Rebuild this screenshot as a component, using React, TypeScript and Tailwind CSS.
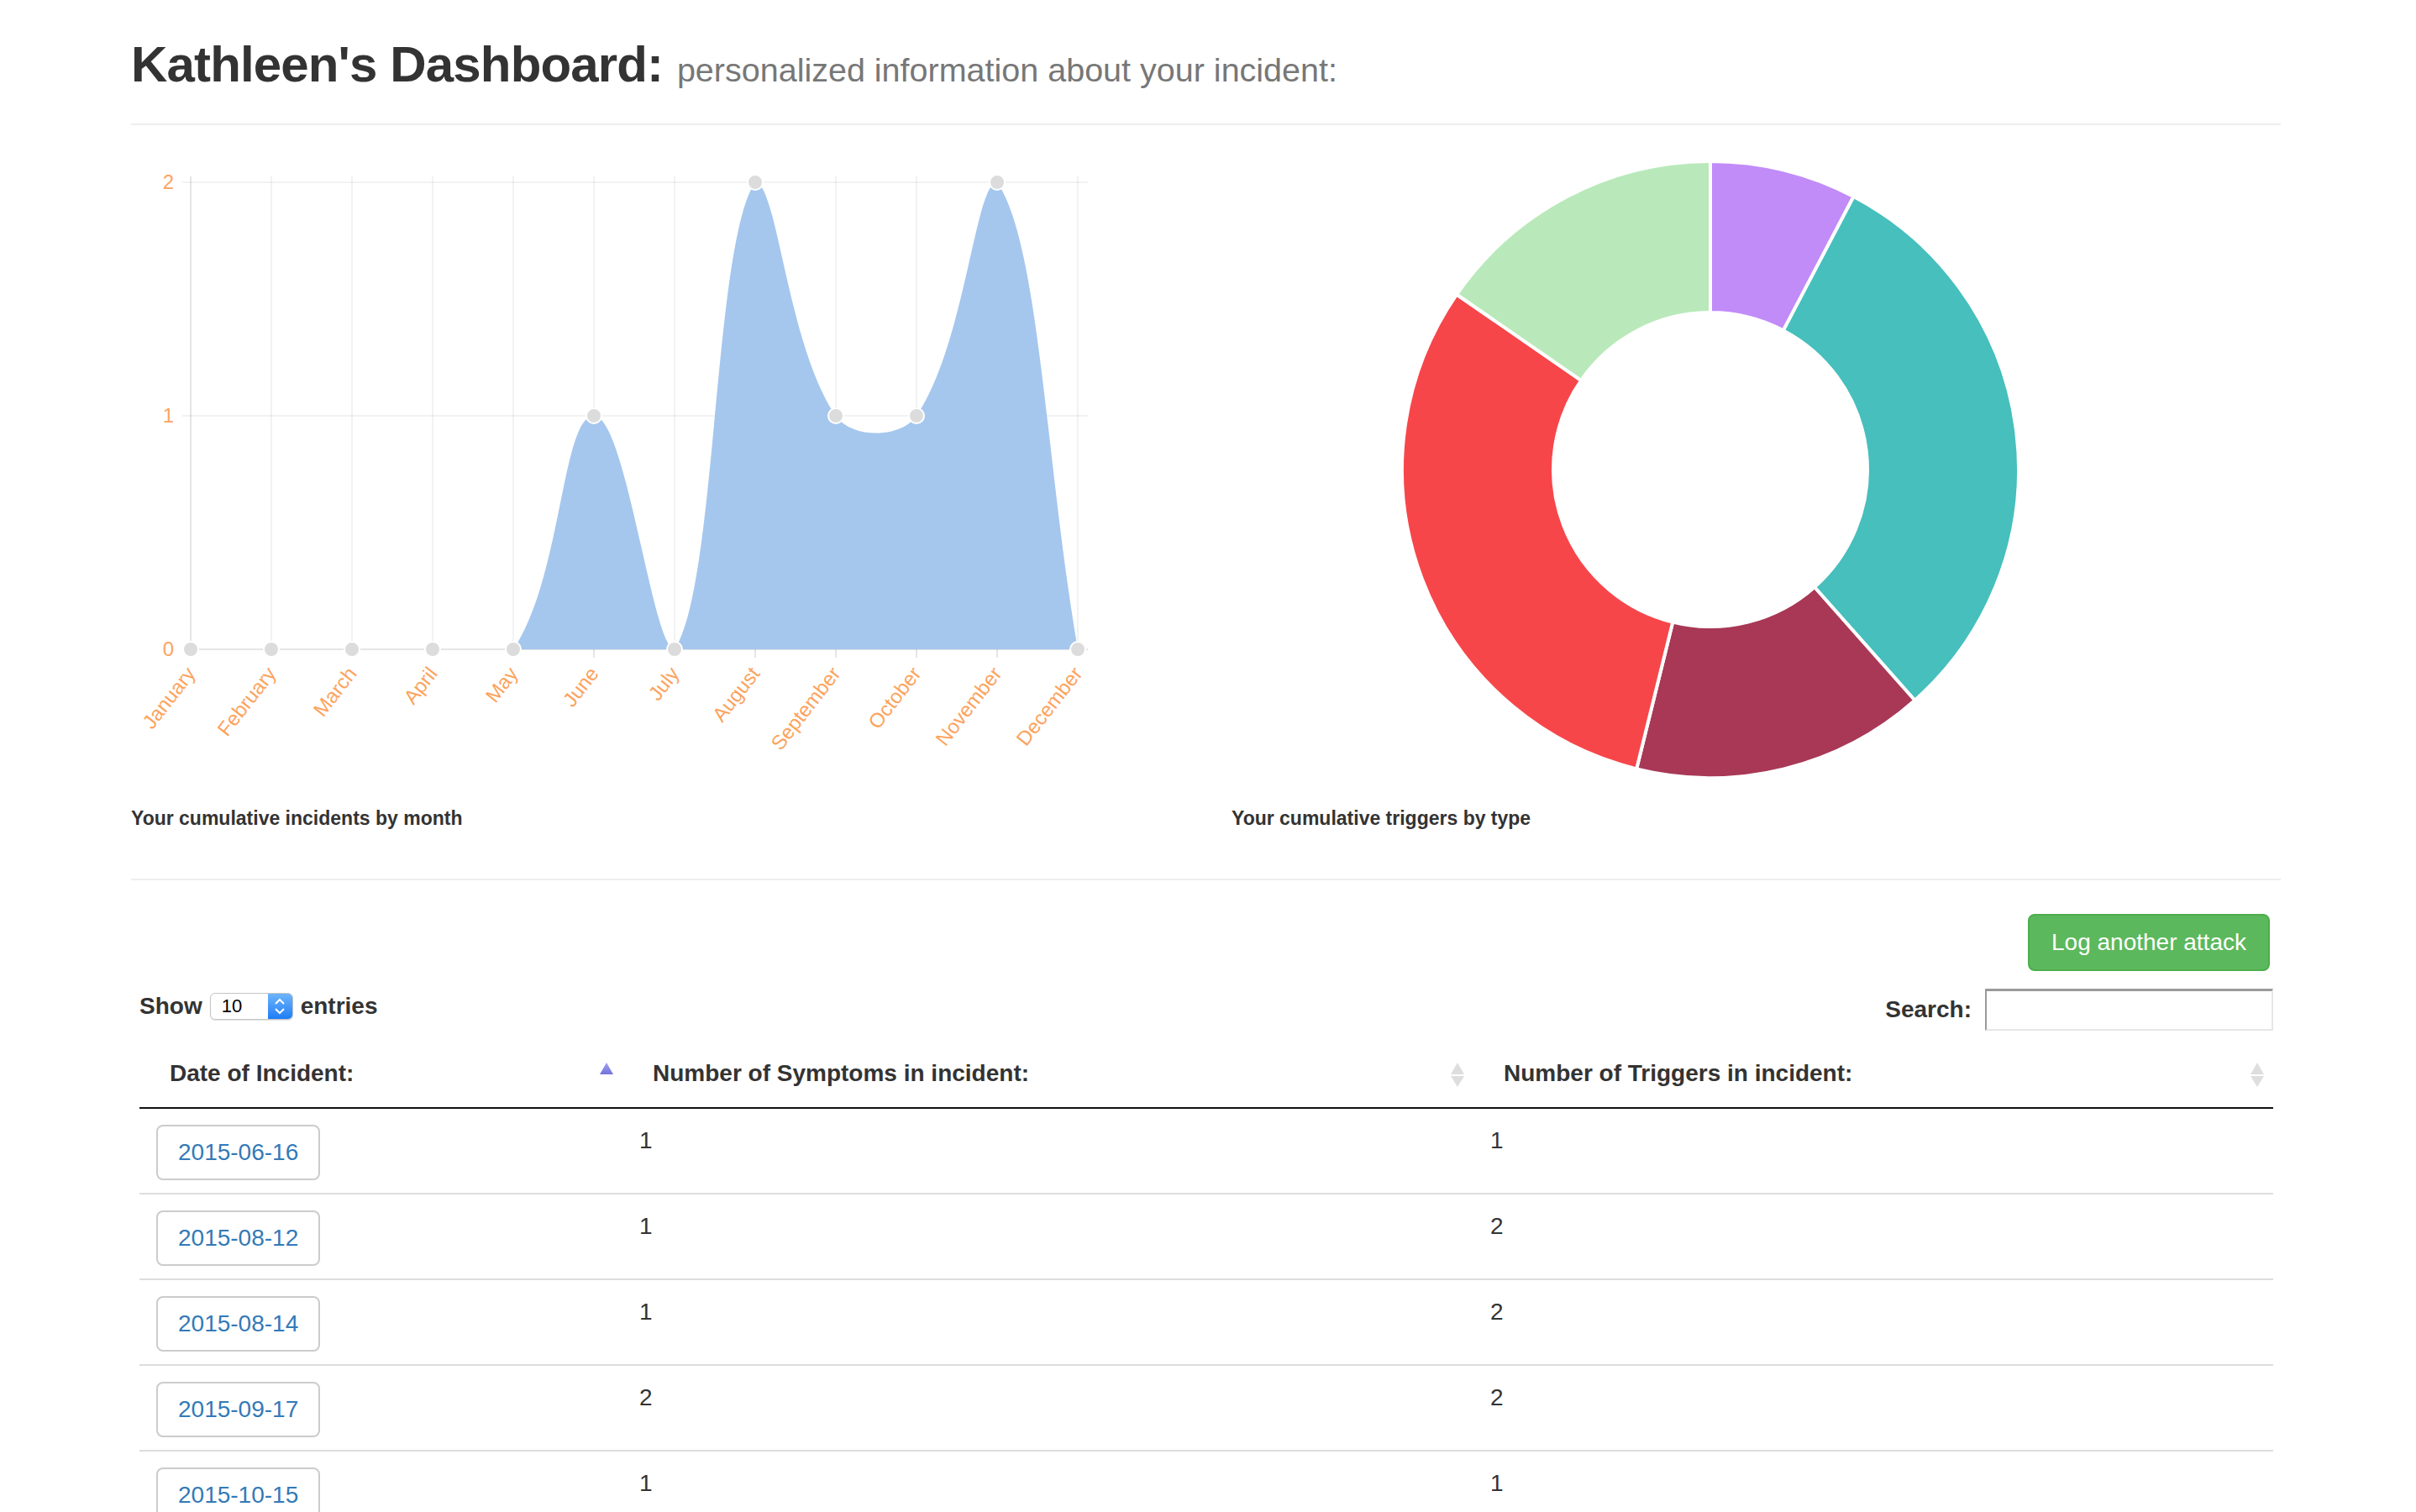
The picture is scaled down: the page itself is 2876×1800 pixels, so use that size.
import React from "react";

const MONTHS = [
  "January",
  "February",
  "March",
  "April",
  "May",
  "June",
  "July",
  "August",
  "September",
  "October",
  "November",
  "December",
];
const VALUES = [0, 0, 0, 0, 0, 1, 0, 2, 1, 1, 2, 0];

const LX = 156;
const LY = 149;
const RX = 1466;
const X0 = 227 - LX;
const STEP = 96;
const Y_BOTTOM = 773 - LY;
const Y_TOP = 217 - LY;
const Y_UNIT = (Y_BOTTOM - Y_TOP) / 2;
const RIGHT_END = 1295 - LX;
const ORANGE = "#fca35d";

type P = { x: number; y: number };

function buildLine() {
  const pts: P[] = VALUES.map((v, i) => ({ x: X0 + STEP * i, y: Y_BOTTOM - v * Y_UNIT }));
  const clamp = (y: number) => Math.min(Y_BOTTOM, Math.max(Y_TOP, y));
  const cps = pts.map((p, i) => {
    const prev = i > 0 ? pts[i - 1] : p;
    const next = i < pts.length - 1 ? pts[i + 1] : p;
    const d01 = Math.hypot(p.x - prev.x, p.y - prev.y);
    const d12 = Math.hypot(next.x - p.x, next.y - p.y);
    const sum = d01 + d12 || 1;
    const fa = (0.4 * d01) / sum;
    const fb = (0.4 * d12) / sum;
    const inner = { x: p.x - fa * (next.x - prev.x), y: clamp(p.y - fa * (next.y - prev.y)) };
    const outer = { x: p.x + fb * (next.x - prev.x), y: clamp(p.y + fb * (next.y - prev.y)) };
    return { inner, outer };
  });
  let d = `M${pts[0].x},${pts[0].y}`;
  for (let i = 1; i < pts.length; i++) {
    const a = cps[i - 1].outer;
    const b = cps[i].inner;
    d += ` C${a.x},${a.y} ${b.x},${b.y} ${pts[i].x},${pts[i].y}`;
  }
  return { pts, d };
}

function LineChart() {
  const { pts, d } = buildLine();
  const fillD = `${d} L${pts[pts.length - 1].x},${Y_BOTTOM} L${pts[0].x},${Y_BOTTOM} Z`;
  return (
    <svg width={1310} height={808} className="block">
      {[0, 1, 2].map((v) => {
        const y = Y_BOTTOM - v * Y_UNIT;
        return (
          <g key={v}>
            <line
              x1={X0 - 10}
              x2={RIGHT_END}
              y1={y}
              y2={y}
              stroke={v === 0 ? "rgba(0,0,0,0.1)" : "rgba(0,0,0,0.05)"}
              strokeWidth={2}
            />
            <text x={X0 - 20} y={y - 1} textAnchor="end" dominantBaseline="central" fontSize={24} fill={ORANGE}>
              {v}
            </text>
          </g>
        );
      })}
      {MONTHS.map((m, i) => {
        const x = X0 + STEP * i;
        return (
          <g key={m}>
            <line
              x1={x}
              x2={x}
              y1={Y_BOTTOM}
              y2={Y_TOP - 7}
              stroke={i === 0 ? "rgba(0,0,0,0.1)" : "rgba(0,0,0,0.05)"}
              strokeWidth={2}
            />
            <line x1={x} x2={x} y1={Y_BOTTOM} y2={Y_BOTTOM + 10} stroke="rgba(0,0,0,0.1)" strokeWidth={2} />
            <text
              transform={`translate(${x},${Y_BOTTOM + 24}) rotate(-52)`}
              textAnchor="end"
              dominantBaseline="central"
              fontSize={24}
              fill={ORANGE}
            >
              {m}
            </text>
          </g>
        );
      })}
      <path d={fillD} fill="#a5c7ee" />
      {pts.map((p, i) => (
        <circle key={i} cx={p.x} cy={p.y} r={9} fill="#dcdcdc" stroke="#ffffff" strokeWidth={2} />
      ))}
    </svg>
  );
}

const SEGMENTS = [
  { v: 1, c: "#c18cf8" },
  { v: 4, c: "#46bfbd" },
  { v: 2, c: "#a83856" },
  { v: 4, c: "#f7464a" },
  { v: 2, c: "#b9e9ba" },
];

function arcPath(cx: number, cy: number, R: number, r: number, a0: number, a1: number) {
  const large = a1 - a0 > Math.PI ? 1 : 0;
  const pt = (rad: number, a: number) => [cx + rad * Math.cos(a), cy + rad * Math.sin(a)];
  const [x0, y0] = pt(R, a0);
  const [x1, y1] = pt(R, a1);
  const [x2, y2] = pt(r, a1);
  const [x3, y3] = pt(r, a0);
  return `M${x0},${y0} A${R},${R} 0 ${large} 1 ${x1},${y1} L${x2},${y2} A${r},${r} 0 ${large} 0 ${x3},${y3} Z`;
}

function Donut() {
  const cx = 2036 - RX;
  const cy = 559 - LY;
  const total = SEGMENTS.reduce((s, x) => s + x.v, 0);
  let a = -Math.PI / 2;
  return (
    <svg width={1249} height={808} className="block">
      {SEGMENTS.map((s, i) => {
        const a0 = a;
        const a1 = a + (s.v / total) * Math.PI * 2;
        a = a1;
        return (
          <path
            key={i}
            d={arcPath(cx, cy, 367, 187, a0, a1)}
            fill={s.c}
            stroke="#ffffff"
            strokeWidth={4}
            strokeLinejoin="round"
          />
        );
      })}
    </svg>
  );
}

function SortBoth() {
  return (
    <svg width={38} height={38} className="absolute right-0 top-1/2 -translate-y-1/2">
      <polygon points="11,20 19,6 27,20" fill="#dedede" />
      <polygon points="11,22 27,22 19,35" fill="#dedede" />
    </svg>
  );
}

function SortAsc() {
  return (
    <svg width={38} height={38} className="absolute right-0 top-1/2 -translate-y-1/2">
      <defs>
        <linearGradient id="ascg" x1="0" y1="0" x2="0" y2="1">
          <stop offset="0" stopColor="#a3a3f0" />
          <stop offset="1" stopColor="#7272dc" />
        </linearGradient>
      </defs>
      <polygon points="11,20 19,6 27,20" fill="url(#ascg)" />
    </svg>
  );
}

const ROWS = [
  { date: "2015-06-16", s: "1", t: "1" },
  { date: "2015-08-12", s: "1", t: "2" },
  { date: "2015-08-14", s: "1", t: "2" },
  { date: "2015-09-17", s: "2", t: "2" },
  { date: "2015-10-15", s: "1", t: "1" },
];

export default function App() {
  return (
    <div className="w-[2876px] h-[1800px] overflow-hidden bg-white text-[#333333] font-['Liberation_Sans',Arial,sans-serif]">
      <div className="ml-[156px] w-[2559px]">
        <div className="h-[147px] pt-[44px]">
          <h2 className="text-[60px] leading-[66px] font-bold whitespace-nowrap">
            <span className="tracking-[-0.85px]">Kathleen's Dashboard:</span>{" "}
            <small className="text-[39.5px] font-normal text-[#777777]">
              personalized information about your incident:
            </small>
          </h2>
        </div>
        <div className="h-[2px] bg-[#eeeeee]" />

        <div className="flex">
          <div className="w-[1310px]">
            <LineChart />
            <h6 className="text-[23px] leading-[34px] font-bold text-[#333333]">
              Your cumulative incidents by month
            </h6>
          </div>
          <div className="w-[1249px]">
            <Donut />
            <h6 className="text-[23px] leading-[34px] font-bold text-[#333333]">
              Your cumulative triggers by type
            </h6>
          </div>
        </div>

        <div className="mt-[55px] h-[2px] bg-[#eeeeee]" />

        <div className="ml-[10px] w-[2540px]">
          <div className="mt-[40px] flex justify-end pr-[4px]">
            <button className="h-[68px] w-[288px] rounded-[8px] border-2 border-[#4cae4c] bg-[#5cb85c] text-[28px] leading-[40px] text-white">
              Log another attack
            </button>
          </div>

          <div className="flex justify-between items-start h-[71px]">
            <div className="mt-[26px] flex items-center h-[32px] text-[28px] leading-[32px] font-bold">
              <span>Show</span>
              <div className="ml-[9px] flex h-[32px] w-[99px] overflow-hidden rounded-[6px] border border-[#c4c4c4] bg-white shadow-[0_1px_1px_rgba(0,0,0,0.12)]">
                <span className="flex-1 pl-[13px] text-[22px] leading-[30px] font-normal text-black">10</span>
                <span className="flex w-[29px] items-center justify-center bg-gradient-to-b from-[#6db4fb] to-[#1a7df6]">
                  <svg width={16} height={22} viewBox="0 0 16 22">
                    <polyline points="3,8 8,3 13,8" fill="none" stroke="#ffffff" strokeWidth={2} />
                    <polyline points="3,14 8,19 13,14" fill="none" stroke="#ffffff" strokeWidth={2} />
                  </svg>
                </span>
              </div>
              <span className="ml-[9px]">entries</span>
            </div>
            <div className="mt-[21px] flex items-center h-[50px]">
              <span className="text-[28px] leading-[40px] font-bold">Search:</span>
              <div className="ml-[16px] h-[50px] w-[343px] border-2 border-t-[3px] border-t-[#9a9a9a] border-l-[#9a9a9a] border-r-[#e6e6e6] border-b-[#e6e6e6] bg-white" />
            </div>
          </div>

          <div className="mt-[11px] flex h-[82px] border-b-2 border-[#111111] text-[28px] leading-[40px] font-bold">
            <div className="relative w-[575px] pl-[36px] pt-[20px]">
              Date of Incident:
              <SortAsc />
            </div>
            <div className="relative w-[1013px] pl-[36px] pt-[20px]">
              Number of Symptoms in incident:
              <SortBoth />
            </div>
            <div className="relative w-[952px] pl-[36px] pt-[20px]">
              Number of Triggers in incident:
              <SortBoth />
            </div>
          </div>

          {ROWS.map((r) => (
            <div key={r.date} className="flex h-[102px] border-b-2 border-[#dddddd] text-[28px] leading-[40px]">
              <div className="w-[575px] pl-[20px] pt-[19px]">
                <span className="inline-block rounded-[8px] border-2 border-[#cccccc] bg-white px-[24px] py-[11px] text-[#337ab7]">
                  {r.date}
                </span>
              </div>
              <div className="w-[1013px] pl-[20px] pt-[18px]">{r.s}</div>
              <div className="w-[952px] pl-[20px] pt-[18px]">{r.t}</div>
            </div>
          ))}
        </div>
      </div>
    </div>
  );
}
